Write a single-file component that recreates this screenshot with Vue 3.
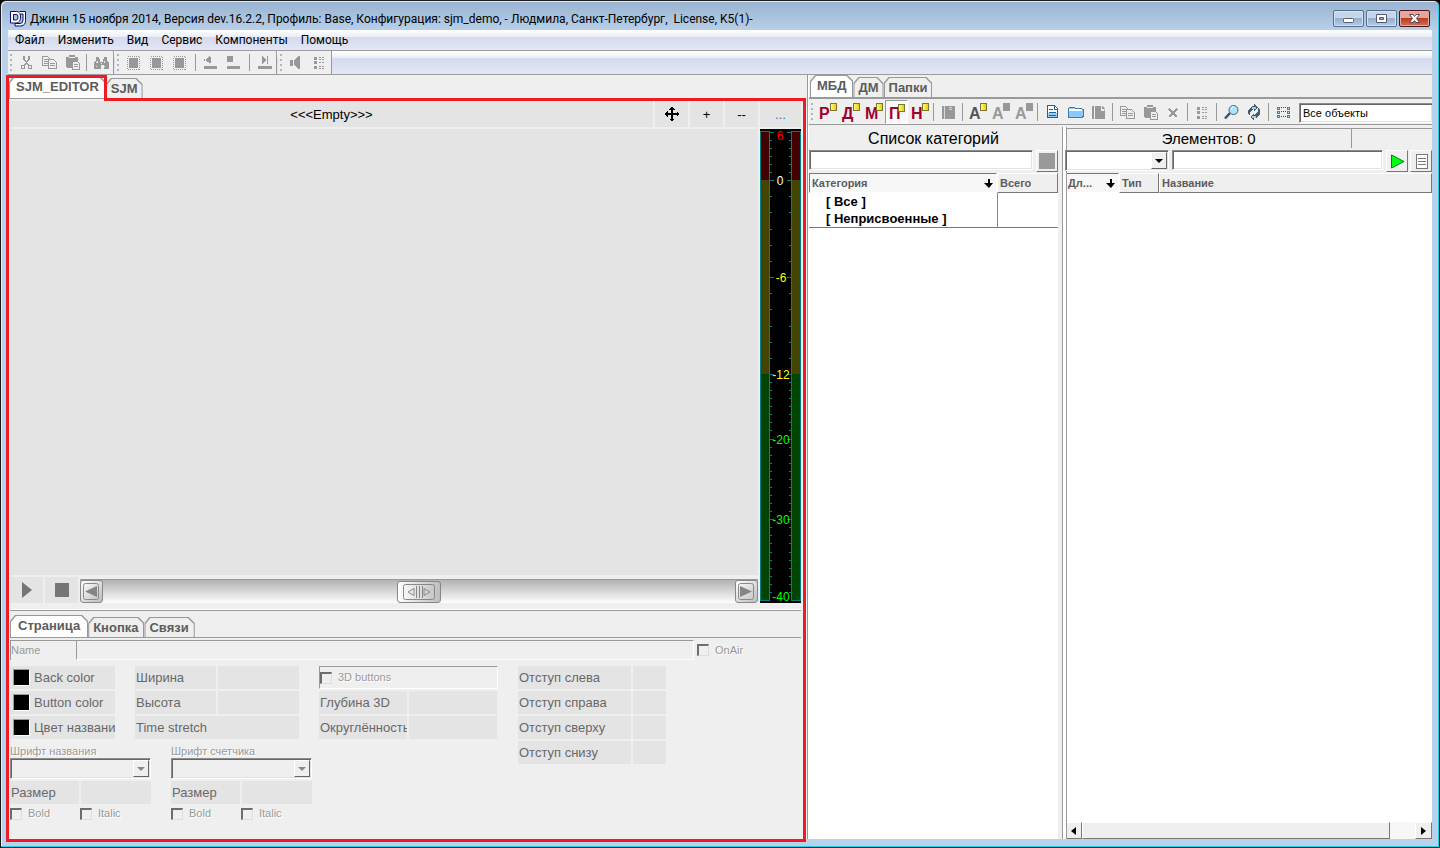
<template>
  <div class="window">
    <header class="title-bar">
      <svg class="app-logo" width="16" height="18" viewBox="0 0 16 18" fill="none" stroke="#0a0a6e">
        <path d="M.5 1.500h6q4 0 4 5.500t-4 6h-6zM3.500 4.500v5.500h2.500q2 0 2-3T6 4.500z" fill="#fff" fill-rule="evenodd" />
        <path d="M9.500 1.500h6v9q0 5-4.500 5.500H5v-2.500h5q3 0 3-3.500V4H9.500" fill="#fff" />
      </svg>
      <h1>Джинн 15 ноября 2014, Версия dev.16.2.2, Профиль: Base, Конфигурация: sjm_demo, - Людмила, Санкт-Петербург,&nbsp; License, K5(1)-</h1>
      <div class="window-buttons">
        <button aria-label="Свернуть">
          <svg width="29" height="15" viewBox="0 0 29 15"><rect x="9.500" y="7.500" width="10" height="4" rx="1" fill="#fff" stroke="#555b70" /></svg>
        </button>
        <button aria-label="Развернуть">
          <svg width="29" height="15" viewBox="0 0 29 15"><path d="M9.500 3.500h10v8h-10zM12.500 6.500v2h4v-2z" fill="#fff" fill-rule="evenodd" stroke="#555b70" /></svg>
        </button>
        <button class="close" aria-label="Закрыть">
          <svg width="29" height="15" viewBox="0 0 29 15"><path d="M9.500 3.500h3.500l1.500 2 1.500-2h3.500L16.500 7.500l3 4H16l-1.500-2-1.500 2H9.500l3-4z" fill="#fff" stroke="#5b4a5c" /></svg>
        </button>
      </div>
    </header>

    <div class="client">
      <nav class="menu-bar">
        <button v-for="item in menuItems" :key="item">{{ item }}</button>
      </nav>

      <div class="main-toolbar">
        <div v-for="(group, g) in mainToolbar" :key="g" class="tool-group">
          <span class="grip"></span>
          <template v-for="(tool, i) in group" :key="i">
            <span v-if="tool === '|'" class="separator"></span>
            <span v-else-if="tool === '||'" class="separator wide"></span>
            <button v-else class="tool" :aria-label="tool">
              <svg width="17" height="17" viewBox="0 0 17 17" shape-rendering="crispEdges">
                <path v-for="(shape, s) in icons[tool]" :key="s" v-bind="shape" />
              </svg>
            </button>
          </template>
        </div>
      </div>

      <main class="workspace">
        <section class="editor">
          <div class="tabs editor-tabs">
            <button class="tab active">SJM_EDITOR</button>
            <button class="tab">SJM</button>
          </div>

          <div class="page-bar">
            <button class="flat page-name">&lt;&lt;&lt;Empty&gt;&gt;&gt;</button>
            <button class="flat" aria-label="Переместить">
              <svg width="16" height="16" viewBox="0 0 16 16" shape-rendering="crispEdges">
                <path d="M8 0l3 3.500H9V7h3.500V5L16 8l-3.500 3V9H9v3.500h2L8 16l-3-3.500h2V9H3.500v2L0 8l3.500-3v2H7V3.500H5z" />
              </svg>
            </button>
            <button class="flat">+</button>
            <button class="flat">--</button>
            <button class="flat more">...</button>
          </div>

          <div class="stage">
            <div class="stage-left">
              <div class="canvas"></div>
              <div class="transport">
                <button class="flat" aria-label="Пуск">
                  <svg width="16" height="16" viewBox="0 0 16 16"><path d="M3 0l10 8-10 8z" fill="#757575" /></svg>
                </button>
                <button class="flat" aria-label="Стоп">
                  <svg width="16" height="16" viewBox="0 0 16 16"><path d="M1 1h14v14H1z" fill="#757575" /></svg>
                </button>
                <div class="position">
                  <button aria-label="Назад">
                    <svg width="23" height="23" viewBox="0 0 23 23"><rect x="3.500" y="3.500" width="15" height="16" rx="2" fill="none" stroke="#888" /><path d="M17 6v11L5 11.500z" fill="#858585" /></svg>
                  </button>
                  <input type="range" min="0" max="100" value="50" aria-label="Позиция" />
                  <button aria-label="Вперёд">
                    <svg width="23" height="23" viewBox="0 0 23 23"><rect x="3.500" y="3.500" width="15" height="16" rx="2" fill="none" stroke="#888" /><path d="M5 6v11l12-5.500z" fill="#858585" /></svg>
                  </button>
                </div>
              </div>
            </div>
            <div class="meter">
              <svg width="41" height="474" viewBox="0 0 41 474" shape-rendering="crispEdges">
                <g v-for="x in [0, 31]" :key="x">
                  <rect :x="x" y="2" width="10" height="470" fill="#008080" />
                  <rect :x="x + 1" y="3" width="8" height="48" fill="#440000" />
                  <rect :x="x + 1" y="51" width="8" height="194" fill="#444400" />
                  <rect :x="x + 1" y="245" width="8" height="226" fill="#004400" />
                </g>
                <path :d="tickPath" fill="none" stroke="#008080" />
                <text v-for="mark in marks" :key="mark.db" :x="mark.x" :y="mark.y" :fill="mark.color" text-anchor="middle">{{ mark.db }}</text>
              </svg>
            </div>
          </div>

          <div class="properties">
            <div class="tabs">
              <button class="tab active">Страница</button>
              <button class="tab">Кнопка</button>
              <button class="tab">Связи</button>
            </div>
            <div class="name-row">
              <label for="page-name">Name</label>
              <input id="page-name" disabled />
              <label class="check"><input type="checkbox" disabled /><span>OnAir</span></label>
            </div>

            <div class="form">
              <div>
                <div class="form-columns">
                  <div class="rows colors">
                    <button v-for="name in colorNames" :key="name" class="color-row" disabled>
                      <span class="swatch"></span><span>{{ name }}</span>
                    </button>
                  </div>
                  <div class="rows sizes">
                    <div v-for="name in ['Ширина', 'Высота']" :key="name" class="pair">
                      <label :for="name">{{ name }}</label><input :id="name" disabled />
                    </div>
                    <button class="stretch" disabled>Time stretch</button>
                  </div>
                  <div class="rows depth">
                    <label class="check framed"><input type="checkbox" disabled /><span>3D buttons</span></label>
                    <div v-for="name in ['Глубина 3D', 'Округлённость']" :key="name" class="pair">
                      <label :for="name">{{ name }}</label><input :id="name" disabled />
                    </div>
                  </div>
                </div>

                <div class="fonts">
                  <div v-for="font in fonts" :key="font.id" class="font-block">
                    <label class="caption" :for="font.id">{{ font.label }}</label>
                    <div class="combo">
                      <select :id="font.id" disabled></select>
                      <span class="combo-arrow"></span>
                    </div>
                    <div class="pair">
                      <label :for="font.id + '-size'">Размер</label><input :id="font.id + '-size'" disabled />
                    </div>
                    <div class="styles">
                      <label class="check"><input type="checkbox" disabled /><span>Bold</span></label>
                      <label class="check"><input type="checkbox" disabled /><span>Italic</span></label>
                    </div>
                  </div>
                </div>
              </div>

              <div class="rows margins">
                <div v-for="side in ['слева', 'справа', 'сверху', 'снизу']" :key="side" class="pair">
                  <label :for="side">Отступ {{ side }}</label><input :id="side" disabled />
                </div>
              </div>
            </div>
          </div>

          <div class="frame-tab"></div>
          <div class="frame-top"></div>
          <div class="frame-body"></div>
        </section>

        <section class="library">
          <div class="tabs library-tabs">
            <button class="tab active">МБД</button>
            <button class="tab">ДМ</button>
            <button class="tab">Папки</button>
          </div>

          <div class="library-toolbar">
            <span class="grip"></span>
            <template v-for="(tool, i) in libraryToolbar" :key="i">
              <span v-if="tool === '|'" class="separator"></span>
              <button v-else-if="tool.letter" class="tool letter" :class="[tool.kind, { pressed: tool.pressed }]">
                {{ tool.letter }}<i></i>
              </button>
              <button v-else class="tool" :aria-label="tool">
                <svg width="17" height="17" viewBox="0 0 17 17" :shape-rendering="tool === 'find' ? 'auto' : 'crispEdges'">
                  <path v-for="(shape, s) in icons[tool]" :key="s" v-bind="shape" />
                </svg>
              </button>
            </template>
            <select class="object-filter" aria-label="Фильтр">
              <option>Все объекты</option>
            </select>
          </div>

          <div class="lists">
            <div class="categories">
              <h2>Список категорий</h2>
              <div class="search-row">
                <input class="sunken" aria-label="Поиск категории" />
                <button class="raised" aria-label="Стоп"><span class="stop-mark"></span></button>
              </div>
              <div class="list">
                <table>
                  <thead>
                    <tr>
                      <th class="sorted">Категория
                        <svg width="9" height="9" viewBox="0 0 9 9"><path :d="sortArrow" /></svg>
                      </th>
                      <th class="total">Всего</th>
                    </tr>
                  </thead>
                  <tbody>
                    <tr v-for="category in categories" :key="category">
                      <td>[ {{ category }} ]</td>
                      <td></td>
                    </tr>
                  </tbody>
                </table>
              </div>
            </div>

            <div class="elements">
              <div class="element-head">
                <h2>Элементов: 0</h2>
                <span></span>
              </div>
              <div class="search-row">
                <div class="combo">
                  <select aria-label="Поле"></select>
                  <span class="combo-arrow"></span>
                </div>
                <input class="sunken" aria-label="Поиск элемента" />
                <button class="raised" aria-label="Найти">
                  <svg width="15" height="15" viewBox="0 0 15 15"><path d="M1.500 1v13L14 7.500z" fill="#00ff18" stroke="#008010" /></svg>
                </button>
                <button class="raised" aria-label="Список">
                  <svg width="15" height="15" viewBox="0 0 15 15" fill="none" stroke="#777" shape-rendering="crispEdges"><path fill="#fff" d="M2.500.5h11v14h-11z" /><path d="M4 4.500h8M4 7.500h8M4 10.500h8" /></svg>
                </button>
              </div>
              <div class="list">
                <table>
                  <thead>
                    <tr>
                      <th class="sorted length">Дл...
                        <svg width="9" height="9" viewBox="0 0 9 9"><path :d="sortArrow" /></svg>
                      </th>
                      <th class="kind">Тип</th>
                      <th>Название</th>
                    </tr>
                  </thead>
                </table>
              </div>
              <div class="scrollbar">
                <button aria-label="Влево"><svg width="5" height="8" viewBox="0 0 5 8"><path d="M5 0v8L0 4z" /></svg></button>
                <div class="scroll-thumb"></div>
                <div class="scroll-track"></div>
                <button aria-label="Вправо"><svg width="5" height="8" viewBox="0 0 5 8"><path d="M0 0v8l5-4z" /></svg></button>
              </div>
            </div>
          </div>
        </section>
      </main>
    </div>
  </div>
</template>

<script setup>
const menuItems = ['Файл', 'Изменить', 'Вид', 'Сервис', 'Компоненты', 'Помощь']

const mainToolbar = [
  ['cut', 'copy', 'paste', '|', 'search'],
  ['block', 'block', 'block', '||', 'prev', 'halt', '||', 'next'],
  ['sound', 'options'],
]

const libraryToolbar = [
  { letter: 'Р' },
  { letter: 'Д' },
  { letter: 'М' },
  { letter: 'П', pressed: true },
  { letter: 'Н' },
  '|',
  'book',
  '|',
  { letter: 'А', kind: 'dark' },
  { letter: 'А', kind: 'off' },
  { letter: 'А', kind: 'off' },
  '|',
  'document',
  'folder',
  'page',
  '|',
  'copy',
  'paste',
  'remove',
  '|',
  'options',
  '|',
  'find',
  'refresh',
  '|',
  'details',
]

const gray = '#989898'
const line = { fill: 'none', stroke: gray }

const icons = {
  cut: [
    { ...line, 'stroke-width': 1.5, d: 'M6 2v3l5 7M11 2v3L6 12' },
    { ...line, d: 'M3.5 11.500h3v3h-3zM10.500 11.500h3v3h-3z' },
  ],
  copy: [
    { ...line, d: 'M1.500 2.500h5l3 3v6h-8zM3 5.500h4M3 7.500h4M3 9.500h4' },
    { fill: '#efefef', stroke: gray, d: 'M7.500 5.500h5l3 3v6h-8zM9 9.500h5M9 11.500h5' },
  ],
  paste: [
    { fill: gray, d: 'M2 3h3V1h6v2h3v4H8v7H3l-1-1z' },
    { fill: '#efefef', d: 'M5 3h6v1H5z' },
    { fill: '#efefef', stroke: gray, d: 'M8.500 7.500h5l2 2v6h-7zM10 10.500h4M10 12.500h4' },
  ],
  search: [
    { fill: gray, d: 'M3 3h3v2h1v3h3V5h1V3h3v3l2 3v6h-5v-4H8v4H1V9l2-3z' },
    { fill: '#efefef', d: 'M4 7h1v2H3v-1h1zM11 7h1v2h-1zM8 9h1v1H8zM3 12h1v1H3zM11 12h1v1h-1z' },
  ],
  block: [
    { fill: gray, d: 'M4 4h9v10H4z' },
    { ...line, 'stroke-dasharray': '1 1', d: 'M2.500 2.500h12v13h-12z' },
  ],
  prev: [{ fill: gray, d: 'M2 12h13v3H2zM4 5l4-3v7L4 7zM2 5h1v2H2zM8 3h1v6H8z' }],
  halt: [{ fill: gray, d: 'M2 12h13v3H2zM2 2h6v6H2z' }],
  next: [{ fill: gray, d: 'M2 12h14v3H2zM6 2l5 4-5 4zM11 2h1v8h-1zM6 2h1v8H6z' }],
  sound: [{ fill: gray, d: 'M2 6h3v6H2zM6 6l5-4v13l-5-4zM10 2h2v13h-2z' }],
  options: [
    { fill: gray, d: 'M3 3h3v3H3zM3 7h3v3H3zM3 12h3v3H3z' },
    { ...line, 'stroke-dasharray': '2 1', d: 'M8 3.500h6M8 5.500h6M8 8.500h6M8 12.500h6M8 14.500h6' },
  ],
  book: [{ fill: gray, d: 'M2 2h2v13H2zM5 2h10v13H5z' }, { fill: '#d8d8d8', d: 'M4 2h1v13H4zM9 3h3v1H9zM9 5h3v1H9z' }],
  document: [
    { fill: '#fff', stroke: '#1768a0', d: 'M3.500 1.500h7l3 3v9h-10z' },
    { fill: '#93cdf8', d: 'M4 9h9v4H4z' },
    { fill: 'none', stroke: '#1768a0', d: 'M5 5.500h4M5 8.500h7M5 11.500h7M10.500 1v4h3' },
  ],
  folder: [
    { fill: '#8bcaf7', stroke: '#3c7ba5', d: 'M1.500 4.500l1-1h5l1 1h6v1H16v7l-1 1H2l-.5-1z' },
    { fill: '#fff', d: 'M2 5h13v2H2z' },
  ],
  page: [{ fill: gray, d: 'M2 2h2v13H2zM5 2h6v4h4v9H5zM12 2l3 3h-3z' }, { fill: '#efefef', d: 'M11 3h1v3h2v1h-3z' }],
  remove: [{ fill: 'none', stroke: gray, 'stroke-width': 1.5, d: 'M4 5l8 8M12 5l-8 8' }],
  find: [
    { fill: 'none', stroke: '#39536b', 'stroke-width': 2.5, d: 'M7 9l-5 5.500' },
    { fill: '#aee2ff', stroke: '#47637c', d: 'M15 6a4.500 4.500 0 1 1-9 0 4.500 4.500 0 1 1 9 0z' },
    { fill: '#fff', d: 'M8 4l2-2h1L8 6z' },
  ],
  refresh: [
    { fill: '#4e5b66', d: 'M2 10V6l4-4h2V0l4 3-4 4V5L4 8v4zM14 6v4l-4 4H8v2l-4-3 4-4v2l4-3V4z' },
    { fill: '#91d5ff', d: 'M6 3h4v2H6zM6 12h4v2H6z' },
  ],
  details: [
    { fill: '#687787', d: 'M2 3h3v3H2zM2 7h3v3H2zM2 11h3v3H2zM12 3h3v3h-3zM12 7h3v3h-3zM12 11h3v3h-3z' },
    { fill: '#b4dcf5', d: 'M3 4h1v1H3zM3 8h1v1H3zM3 12h1v1H3zM13 4h1v1h-1zM13 8h1v1h-1zM13 12h1v1h-1z' },
    { fill: 'none', stroke: '#444', 'stroke-dasharray': '1 1', d: 'M6 3.500h5M6 7.500h5M6 12.500h5' },
  ],
}

const sortArrow = 'M4 0h2v4h3L5 9 0 4h4z'

const colorNames = ['Back color', 'Button color', 'Цвет названия']
const fonts = [
  { id: 'title-font', label: 'Шрифт названия' },
  { id: 'counter-font', label: 'Шрифт счетчика' },
]
const categories = ['Все', 'Неприсвоенные']

// the scale is twice as wide between 0 and -12 dB
const levelY = (db) => {
  if (db >= 0) return 51 - db * 8
  if (db >= -12) return 51 - Math.round(db * 16.17)
  return 245 + Math.round((-12 - db) * 8.07)
}

const marks = [
  { db: 6, color: '#ff0000', x: 20, y: 11 },
  { db: 0, color: '#ffffff', x: 20 },
  { db: -6, color: '#ffff00', x: 21 },
  { db: -12, color: '#ffff00', x: 21 },
  { db: -20, color: '#00ff00', x: 21 },
  { db: -30, color: '#00ff00', x: 21 },
  { db: -40, color: '#00ff00', x: 21, y: 472 },
].map((mark) => ({ y: levelY(mark.db) + 5, ...mark }))

const tickPath = Array.from({ length: 46 }, (_, i) => 6 - i)
  .map((db) => {
    const size = marks.some((mark) => mark.db === db) ? 4 : 2
    const y = levelY(db) + 0.5
    return `M10 ${y}h${size}M31 ${y}h-${size}`
  })
  .join('')
</script>

<style>
body {
  margin: 0;
  background: #000;
}
</style>

<style scoped>
* {
  box-sizing: border-box;
}

.window {
  display: flex;
  flex-direction: column;
  height: 100vh;
  padding: 0 7px 8px;
  overflow: hidden;
  border: 1px solid #1a1a1a;
  border-radius: 6px 6px 0 0;
  background: linear-gradient(180deg, #98b2d0 0, #b9d1ea 30px);
  box-shadow: inset -1px -1px #26d0e8, inset 1px 1px #e4eefa;
  font: 11px/13px 'Liberation Sans', Arial, sans-serif;
  color: #000;
}

button,
input,
select {
  margin: 0;
  padding: 0;
  border: 0;
  border-radius: 0;
  background: none;
  font: inherit;
  color: inherit;
}

input,
select {
  min-width: 0;
  outline: none;
}

svg {
  display: block;
  flex: none;
}

h1,
h2 {
  margin: 0;
  font-weight: 400;
}

.title-bar {
  display: flex;
  align-items: center;
  flex: none;
  height: 29px;
  padding: 6px 2px 0;
}

.title-bar h1 {
  flex: 1;
  margin-left: 4px;
  overflow: hidden;
  white-space: pre;
  font: 12px/16px Roboto, 'Open Sans', sans-serif;
}

.window-buttons {
  display: flex;
  gap: 2px;
}

.window-buttons button {
  width: 31px;
  height: 17px;
  border: 1px solid #566f90;
  border-radius: 2px;
  background: linear-gradient(#c5d6e8 45%, #94b0cf 50%, #b5cde6);
  box-shadow: inset 0 0 0 1px #d3e2f1;
}

.window-buttons .close {
  border-color: #4b1420;
  background: linear-gradient(#e3a699 45%, #bc3c22 50%, #cf7354);
  box-shadow: inset 0 0 0 1px #e2aea2;
}

.client {
  display: flex;
  flex-direction: column;
  flex: 1;
  min-height: 0;
  background: #efefef;
}

.menu-bar,
.main-toolbar {
  display: flex;
  flex: none;
  background: linear-gradient(#fff, #e9edf5 7px, #d3daed 7px, #e2e7f6);
}

.menu-bar {
  height: 21px;
  border-bottom: 1px solid #9c9c9c;
}

.menu-bar button {
  padding: 0 6px 0 7px;
  font: 12px/20px Roboto, 'Open Sans', sans-serif;
}

.main-toolbar {
  height: 24px;
  border-bottom: 1px solid #9c9c9c;
}

.tool-group {
  display: flex;
  margin-right: 1px;
  border-right: 1px solid #9a9a9a;
  background: #efefef;
}

.grip {
  width: 7px;
  margin: 2px 0;
  background: linear-gradient(#b4b4b4 2px, transparent 2px) 2px 1px / 2px 5px repeat-y;
}

.tool {
  display: flex;
  align-items: center;
  justify-content: center;
  width: 23px;
}

.separator {
  width: 6px;
  margin: 3px 0;
  background: linear-gradient(#9a9a9a, #9a9a9a) 2px 0 / 1px 100% no-repeat;
}

.separator.wide {
  width: 8px;
  background-position: 4px 0;
}

.workspace {
  display: grid;
  grid-template-columns: minmax(0, 800fr) minmax(0, 624fr);
  flex: 1;
  min-height: 0;
}

.tabs {
  display: flex;
  align-items: flex-end;
  flex: none;
  height: 23px;
  border-bottom: 1px solid #999;
}

.tab {
  position: relative;
  isolation: isolate;
  height: 20px;
  padding: 2px 5px 0;
  background: #989898;
  clip-path: polygon(0 6px, 5px 0, calc(100% - 6px) 0, 100% 6px, 100% 100%, 0 100%);
  font: bold 13px/18px 'Liberation Sans', Arial, sans-serif;
  color: #5c5c5c;
}

.tab::before {
  content: '';
  position: absolute;
  inset: 1px 1px 0;
  z-index: -1;
  background: #efefef;
  clip-path: polygon(0 6px, 5px 0, calc(100% - 6px) 0, 100% 6px, 100% 100%, 0 100%);
}

.tab.active {
  height: 22px;
  padding: 0 7px;
}

.tab.active::before {
  background: #fff;
}

.editor {
  position: relative;
  display: flex;
  flex-direction: column;
  padding: 0 6px 0 2px;
  border-right: 1px solid #999;
}

.editor-tabs {
  height: 24px;
  margin: 0 0 2px -1px;
}

.flat {
  display: flex;
  align-items: center;
  justify-content: center;
  width: 33px;
  background: #e4e4e4;
  font-size: 13px;
}

.page-bar {
  display: flex;
  gap: 2px;
  flex: none;
  height: 26px;
}

.page-bar .page-name {
  flex: 1;
}

.page-bar .more {
  width: 41px;
  color: #287cad;
}

.stage {
  display: flex;
  gap: 2px;
  flex: 1;
  min-height: 0;
  margin-top: 2px;
}

.stage-left {
  display: flex;
  flex-direction: column;
  gap: 2px;
  flex: 1;
  min-width: 0;
}

.canvas {
  flex: 1;
  background: #e4e4e4;
}

.transport {
  display: flex;
  gap: 2px;
  height: 26px;
}

.position {
  display: flex;
  flex: 1;
  min-width: 0;
  height: 24px;
  margin-top: 2px;
  border-top: 1px solid #999;
  background: linear-gradient(#b2b2b2, #fdfdfd);
}

.position button {
  width: 23px;
  border: 1px solid #888;
  border-radius: 3px;
  background: linear-gradient(135deg, #fff, #bdbdbd);
}

.position button svg {
  margin: -1px;
}

.position input {
  flex: 1;
  appearance: none;
}

.position input::-webkit-slider-thumb {
  appearance: none;
  width: 44px;
  height: 22px;
  border: 1px solid #888;
  border-radius: 3px;
  background: url("data:image/svg+xml,%3Csvg xmlns='http://www.w3.org/2000/svg' width='42' height='20' fill='none' stroke='%23888'%3E%3Crect x='5.500' y='2.500' width='31' height='15' rx='2'/%3E%3Cpath d='M16 6.500v7l-6-3.500zM26 6.500v7l6-3.500zM18.500 4v12M21.500 4v12M24.500 4v12'/%3E%3C/svg%3E") center no-repeat, linear-gradient(90deg, #fff, #bebebe);
}

.meter {
  width: 41px;
  overflow: hidden;
  background: #000;
}

.meter text {
  font: 12px 'Liberation Sans', Arial, sans-serif;
}

.properties {
  flex: none;
  margin-top: 7px;
  padding: 4px 0 18px;
  border-top: 1px solid #999;
  box-shadow: 0 -1px #fff;
  color: #999;
}

.properties .tab {
  padding-right: 6px;
  padding-left: 5px;
}

.properties .tab.active {
  padding-right: 8px;
  padding-left: 8px;
}

.name-row {
  display: flex;
  height: 20px;
  margin-top: 2px;
  line-height: 19px;
}

.name-row > label:first-child {
  width: 66px;
  border: solid #999;
  border-width: 1px 0 0 1px;
}

.name-row > input {
  flex: 1;
  border: 1px solid #999;
  border-right-color: #fff;
  border-bottom-color: #fff;
}

.name-row .check {
  width: 107px;
  padding-left: 3px;
}

.check {
  display: flex;
  align-items: center;
  gap: 6px;
  text-shadow: 1px 1px #fff;
}

.check input {
  appearance: none;
  width: 12px;
  height: 12px;
  border: 1px solid #ddd;
  border-top: 2px solid #6d6d6d;
  border-left: 2px solid #6d6d6d;
  background: #efefef;
}

.form {
  display: flex;
  gap: 20px;
  margin-top: 6px;
}

.form-columns {
  display: flex;
  gap: 20px;
}

.rows {
  display: flex;
  flex-direction: column;
  gap: 2px;
}

.colors {
  width: 105px;
}

.sizes {
  width: 164px;
}

.depth {
  width: 179px;
}

.margins {
  width: 148px;
}

.color-row {
  display: flex;
  align-items: center;
  gap: 4px;
  padding-left: 3px;
  overflow: hidden;
  white-space: nowrap;
}

.color-row,
.stretch,
.pair label {
  height: 23px;
  background: #e4e4e4;
  font: 13px/23px 'Liberation Sans', Arial, sans-serif;
  text-align: left;
  color: #686868;
}

.stretch {
  padding-left: 1px;
}

.swatch {
  flex: none;
  width: 17px;
  height: 17px;
  border: 1px solid #fff;
  border-top-color: #999;
  border-left-color: #999;
  background: #000;
}

.pair {
  display: flex;
  gap: 2px;
}

.pair label {
  flex: none;
  width: 81px;
  padding-left: 1px;
  overflow: hidden;
  white-space: nowrap;
}

.pair input {
  flex: 1;
  height: 23px;
  background: #e4e4e4;
}

.depth .pair {
  width: 178px;
}

.depth .pair label {
  width: 88px;
}

.margins .pair label {
  width: 113px;
}

.framed {
  height: 23px;
  border: 1px solid #fff;
  border-top-color: #999;
  border-left-color: #999;
}

.fonts {
  display: flex;
  gap: 20px;
  margin-top: 6px;
}

.font-block {
  width: 141px;
}

.font-block .pair {
  margin-top: 2px;
}

.font-block .pair label {
  width: 69px;
}

.caption {
  display: block;
  text-shadow: 1px 1px #fff;
}

.combo {
  position: relative;
  height: 21px;
}

.combo select,
.sunken,
.object-filter {
  appearance: none;
  width: 100%;
  height: 100%;
  border: 1px solid #fff;
  border-top-color: #8c8c8c;
  border-left-color: #8c8c8c;
  background: #fff;
  box-shadow: inset 1px 1px #666, inset -1px -1px #e2e2e2;
}

.combo select:disabled {
  background: #efefef;
  opacity: 1;
}

.combo-arrow {
  position: absolute;
  top: 2px;
  right: 2px;
  bottom: 2px;
  width: 16px;
  border: 1px solid #666;
  border-top-color: #fff;
  border-left-color: #fff;
  background: #efefef;
  pointer-events: none;
}

.combo-arrow::after {
  content: '';
  position: absolute;
  top: 6px;
  left: 3px;
  border: 4px solid transparent;
  border-top-color: #000;
  border-bottom: 0;
}

.fonts .combo-arrow::after {
  border-top-color: #888;
}

.styles {
  display: flex;
  margin-top: 2px;
}

.styles .check {
  width: 70px;
  height: 15px;
}

/* red outline around the active editor page */
.frame-tab,
.frame-top,
.frame-body {
  position: absolute;
  border: 0 solid #ed1c24;
  pointer-events: none;
}

.frame-tab {
  top: 0;
  left: -2px;
  width: 101px;
  height: 26px;
  border-width: 3px 3px 0;
}

.frame-top {
  top: 23px;
  right: 1px;
  left: 96px;
  border-top-width: 3px;
}

.frame-body {
  top: 23px;
  right: 1px;
  bottom: -3px;
  left: -2px;
  border-width: 0 3px 3px;
}

.library {
  display: flex;
  flex-direction: column;
  min-width: 0;
  border-left: 1px solid #fff;
}

.library-tabs {
  height: 24px;
  padding-left: 1px;
  border-bottom: 2px solid #999;
}

.library-toolbar {
  display: flex;
  flex: none;
  height: 26px;
  padding-top: 1px;
  overflow: hidden;
  border-bottom: 1px solid #999;
}

.letter {
  position: relative;
  justify-content: flex-start;
  padding: 3px 0 0 3px;
  font: bold 16px/18px 'Liberation Sans', Arial, sans-serif;
  color: #a0002c;
}

.letter i {
  position: absolute;
  top: 3px;
  right: 2px;
  width: 7px;
  height: 8px;
  border: 1px solid #7d7435;
  background: linear-gradient(90deg, #fff77c, #e2d500);
}

.letter.dark {
  color: #555;
}

.letter.off {
  color: #989898;
}

.letter.off i {
  border-color: #989898;
  background: #989898;
}

.letter.pressed {
  border: 1px solid #fff;
  border-top-color: #999;
  border-left-color: #999;
  background: #f8f8f8;
}

.library-toolbar .object-filter {
  flex: 1;
  width: 0;
  height: 20px;
  margin: 3px 0 0 4px;
  padding-left: 3px;
  border-right: 0;
}

.lists {
  display: grid;
  grid-template-columns: minmax(0, 249fr) minmax(0, 367fr);
  gap: 7px;
  flex: 1;
  min-height: 0;
}

.categories,
.elements {
  display: flex;
  flex-direction: column;
  min-width: 0;
}

.elements {
  position: relative;
}

.elements::before {
  content: '';
  position: absolute;
  top: 2px;
  bottom: 0;
  left: -3px;
  width: 3px;
  border: solid #999;
  border-width: 0 1px;
  background: #fff;
}

h2 {
  height: 25px;
  font-size: 16px;
  line-height: 27px;
  text-align: center;
}

.search-row {
  display: flex;
  gap: 3px;
  flex: none;
  height: 22px;
}

.search-row .sunken {
  flex: 1;
  width: 0;
  height: 20px;
}

.search-row .combo {
  width: 104px;
}

.raised {
  display: flex;
  align-items: center;
  justify-content: center;
  width: 22px;
  height: 22px;
  border: 1px solid #777;
  border-top-color: #fff;
  border-left-color: #fff;
  background: #efefef;
}

.elements .raised + .raised {
  margin-left: -1px;
}

.stop-mark {
  width: 16px;
  height: 16px;
  background: #999;
}

.list {
  flex: 1;
  min-height: 0;
  margin-top: 1px;
  overflow: hidden;
  background: #fff;
}

table {
  width: 100%;
  border-spacing: 0;
  table-layout: fixed;
}

th {
  height: 20px;
  padding: 0 2px;
  border: 1px solid #777;
  border-top-color: #fff;
  border-left-color: #fff;
  background: #efefef;
  font: bold 11px/17px 'Liberation Sans', Arial, sans-serif;
  text-align: left;
  color: #5c5c5c;
}

th.sorted {
  border-color: #777 #fff #fff #777;
  background: #f7f7f7;
}

th svg {
  float: right;
  margin: 4px 1px 0 0;
  fill: #000;
}

th.total {
  width: 61px;
}

th.length {
  width: 54px;
}

th.kind {
  width: 40px;
}

td {
  height: 17px;
  padding: 0 0 0 17px;
  font: bold 13px/17px 'Liberation Sans', Arial, sans-serif;
}

td + td {
  border-left: 1px solid #8a8a8a;
}

tbody tr:last-child td {
  border-bottom: 1px solid #777;
}

.element-head {
  display: flex;
  height: 21px;
  margin: 3px 0 1px;
}

.element-head h2 {
  flex: 287;
  height: 20px;
  border: solid #999;
  border-width: 1px 0 0 1px;
  font-size: 15px;
  line-height: 20px;
}

.element-head span {
  flex: 80;
  height: 20px;
  border: solid #999;
  border-width: 1px 0 0 1px;
}

.scrollbar {
  display: flex;
  flex: none;
  height: 17px;
  background: #f7f7f7;
}

.scrollbar button,
.scroll-thumb {
  border: 1px solid #777;
  border-top-color: #fff;
  border-left-color: #fff;
  background: #efefef;
}

.scrollbar button {
  display: flex;
  align-items: center;
  justify-content: center;
  width: 17px;
}

.scroll-thumb {
  flex: 307;
}

.scroll-track {
  flex: 25;
}
</style>
